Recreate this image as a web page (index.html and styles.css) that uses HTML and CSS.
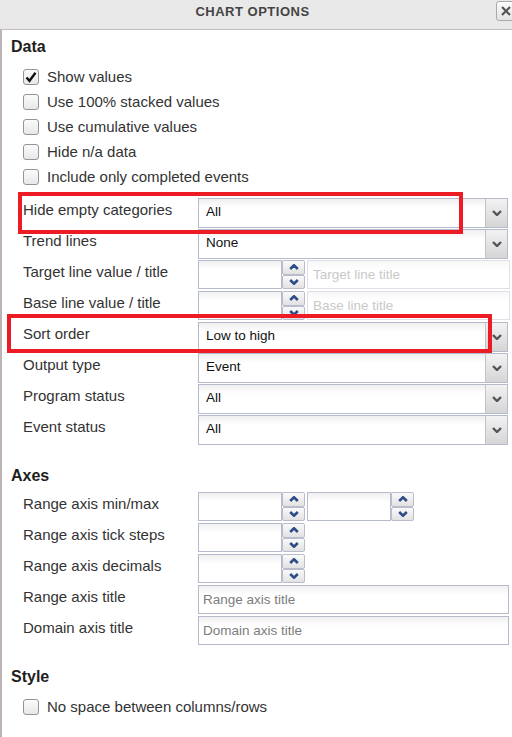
FILE: index.html
```html
<!DOCTYPE html>
<html lang="en">
<head>
<meta charset="utf-8">
<title>Chart options</title>
<link rel="stylesheet" href="styles.css">
</head>
<body>
<div class="dialog">
  <header class="titlebar">
    <span class="title">CHART OPTIONS</span>
    <button class="close" aria-label="Close">
      <svg width="12" height="12" viewBox="0 0 12 12"><path d="M2 2 L10 10 M10 2 L2 10" stroke="#555" stroke-width="2.2" fill="none"/></svg>
    </button>
  </header>

  <div class="main">
    <section class="group">
      <h2 class="group-title">Data</h2>
      <div class="checks">
        <label class="check"><span class="box"><svg width="14" height="14" viewBox="0 0 14 14"><path d="M2.5 7.5 L5.5 10.8 L11.5 2.8" stroke="#111" stroke-width="2.4" fill="none"/></svg></span>Show values</label>
        <label class="check"><span class="box"></span>Use 100% stacked values</label>
        <label class="check"><span class="box"></span>Use cumulative values</label>
        <label class="check"><span class="box"></span>Hide n/a data</label>
        <label class="check"><span class="box"></span>Include only completed events</label>
      </div>
      <div class="fields">
        <div class="field">
          <span class="field-label">Hide empty categories</span>
          <div class="select"><span class="select-value">All</span><span class="select-btn"><svg width="10" height="6" viewBox="0 0 10 6"><path d="M1 1 L5 5 L9 1" stroke="#555" stroke-width="2.4" fill="none"/></svg></span></div>
        </div>
        <div class="field">
          <span class="field-label">Trend lines</span>
          <div class="select"><span class="select-value">None</span><span class="select-btn"><svg width="10" height="6" viewBox="0 0 10 6"><path d="M1 1 L5 5 L9 1" stroke="#555" stroke-width="2.4" fill="none"/></svg></span></div>
        </div>
        <div class="field">
          <span class="field-label">Target line value / title</span>
          <div class="control">
            <div class="spin"><span class="spin-input"></span><span class="spin-btns"><span class="spin-btn"><svg width="10" height="6" viewBox="0 0 10 6"><path d="M1.2 5 L5 1.3 L8.8 5" stroke="#2d4b86" stroke-width="2.6" fill="none"/></svg></span><span class="spin-btn"><svg width="10" height="6" viewBox="0 0 10 6"><path d="M1.2 1 L5 4.7 L8.8 1" stroke="#2d4b86" stroke-width="2.6" fill="none"/></svg></span></span></div>
            <input class="text text-wide text-disabled" type="text" placeholder="Target line title" disabled>
          </div>
        </div>
        <div class="field">
          <span class="field-label">Base line value / title</span>
          <div class="control">
            <div class="spin"><span class="spin-input"></span><span class="spin-btns"><span class="spin-btn"><svg width="10" height="6" viewBox="0 0 10 6"><path d="M1.2 5 L5 1.3 L8.8 5" stroke="#2d4b86" stroke-width="2.6" fill="none"/></svg></span><span class="spin-btn"><svg width="10" height="6" viewBox="0 0 10 6"><path d="M1.2 1 L5 4.7 L8.8 1" stroke="#2d4b86" stroke-width="2.6" fill="none"/></svg></span></span></div>
            <input class="text text-wide text-disabled" type="text" placeholder="Base line title" disabled>
          </div>
        </div>
        <div class="field">
          <span class="field-label">Sort order</span>
          <div class="select"><span class="select-value">Low to high</span><span class="select-btn"><svg width="10" height="6" viewBox="0 0 10 6"><path d="M1 1 L5 5 L9 1" stroke="#555" stroke-width="2.4" fill="none"/></svg></span></div>
        </div>
        <div class="field">
          <span class="field-label">Output type</span>
          <div class="select"><span class="select-value">Event</span><span class="select-btn"><svg width="10" height="6" viewBox="0 0 10 6"><path d="M1 1 L5 5 L9 1" stroke="#555" stroke-width="2.4" fill="none"/></svg></span></div>
        </div>
        <div class="field">
          <span class="field-label">Program status</span>
          <div class="select"><span class="select-value">All</span><span class="select-btn"><svg width="10" height="6" viewBox="0 0 10 6"><path d="M1 1 L5 5 L9 1" stroke="#555" stroke-width="2.4" fill="none"/></svg></span></div>
        </div>
        <div class="field">
          <span class="field-label">Event status</span>
          <div class="select"><span class="select-value">All</span><span class="select-btn"><svg width="10" height="6" viewBox="0 0 10 6"><path d="M1 1 L5 5 L9 1" stroke="#555" stroke-width="2.4" fill="none"/></svg></span></div>
        </div>
      </div>
    </section>

    <section class="group group-axes">
      <h2 class="group-title">Axes</h2>
      <div class="fields fields-tight">
        <div class="field">
          <span class="field-label">Range axis min/max</span>
          <div class="control">
            <div class="spin"><span class="spin-input"></span><span class="spin-btns"><span class="spin-btn"><svg width="10" height="6" viewBox="0 0 10 6"><path d="M1.2 5 L5 1.3 L8.8 5" stroke="#2d4b86" stroke-width="2.6" fill="none"/></svg></span><span class="spin-btn"><svg width="10" height="6" viewBox="0 0 10 6"><path d="M1.2 1 L5 4.7 L8.8 1" stroke="#2d4b86" stroke-width="2.6" fill="none"/></svg></span></span></div>
            <div class="spin"><span class="spin-input"></span><span class="spin-btns"><span class="spin-btn"><svg width="10" height="6" viewBox="0 0 10 6"><path d="M1.2 5 L5 1.3 L8.8 5" stroke="#2d4b86" stroke-width="2.6" fill="none"/></svg></span><span class="spin-btn"><svg width="10" height="6" viewBox="0 0 10 6"><path d="M1.2 1 L5 4.7 L8.8 1" stroke="#2d4b86" stroke-width="2.6" fill="none"/></svg></span></span></div>
          </div>
        </div>
        <div class="field">
          <span class="field-label">Range axis tick steps</span>
          <div class="control">
            <div class="spin"><span class="spin-input"></span><span class="spin-btns"><span class="spin-btn"><svg width="10" height="6" viewBox="0 0 10 6"><path d="M1.2 5 L5 1.3 L8.8 5" stroke="#2d4b86" stroke-width="2.6" fill="none"/></svg></span><span class="spin-btn"><svg width="10" height="6" viewBox="0 0 10 6"><path d="M1.2 1 L5 4.7 L8.8 1" stroke="#2d4b86" stroke-width="2.6" fill="none"/></svg></span></span></div>
          </div>
        </div>
        <div class="field">
          <span class="field-label">Range axis decimals</span>
          <div class="control">
            <div class="spin"><span class="spin-input"></span><span class="spin-btns"><span class="spin-btn"><svg width="10" height="6" viewBox="0 0 10 6"><path d="M1.2 5 L5 1.3 L8.8 5" stroke="#2d4b86" stroke-width="2.6" fill="none"/></svg></span><span class="spin-btn"><svg width="10" height="6" viewBox="0 0 10 6"><path d="M1.2 1 L5 4.7 L8.8 1" stroke="#2d4b86" stroke-width="2.6" fill="none"/></svg></span></span></div>
          </div>
        </div>
        <div class="field">
          <span class="field-label">Range axis title</span>
          <div class="control"><input class="text text-full" type="text" placeholder="Range axis title"></div>
        </div>
        <div class="field">
          <span class="field-label">Domain axis title</span>
          <div class="control"><input class="text text-full" type="text" placeholder="Domain axis title"></div>
        </div>
      </div>
    </section>

    <section class="group group-style">
      <h2 class="group-title">Style</h2>
      <div class="checks">
        <label class="check"><span class="box"></span>No space between columns/rows</label>
      </div>
    </section>
  </div>

  <div class="mark mark-1"></div>
  <div class="mark mark-2"></div>
</div>
</body>
</html>
```

FILE: styles.css
```css
* { box-sizing: border-box; }

html, body {
  margin: 0;
  padding: 0;
}

body {
  width: 512px;
  height: 737px;
  overflow: hidden;
  background: #fff;
  font-family: "Liberation Sans", Arial, sans-serif;
  color: #333;
}

.dialog {
  position: relative;
  width: 512px;
  height: 737px;
}

.titlebar {
  position: relative;
  height: 30px;
  background: #e9e9e9;
  border-bottom: 1px solid #c4bcbc;
  display: flex;
  justify-content: center;
  align-items: flex-start;
  padding: 4px 7px 0 0;
}

.title {
  font-size: 13px;
  line-height: 15px;
  font-weight: bold;
  letter-spacing: 0.5px;
  color: #444;
}

.close {
  position: absolute;
  top: 1px;
  left: 496px;
  width: 19px;
  height: 20px;
  padding: 0;
  border: 1px solid #aaa;
  border-radius: 3px;
  background: linear-gradient(#fbfbfb, #e4e4e4);
  display: flex;
  align-items: center;
  justify-content: center;
}

.main {
  height: 707px;
  border-left: 2px solid #bcb4b4;
  padding: 8px 2px 0 9px;
}

.group + .group {
  margin-top: 21px;
}

.group-title {
  margin: 0 0 7px;
  font-size: 16px;
  line-height: 18px;
  font-weight: bold;
  color: #1e1e1e;
}

.checks {
  padding-left: 12px;
  padding-top: 1px;
}

.check {
  display: flex;
  align-items: center;
  gap: 8px;
  height: 25px;
  font-size: 15px;
  line-height: 17px;
  color: #333;
}

.box {
  width: 16px;
  height: 16px;
  border: 1px solid #959595;
  border-radius: 3px;
  background: linear-gradient(#fbfbfb, #e8e8e8);
  display: flex;
  align-items: center;
  justify-content: center;
}

.fields {
  margin-top: 9px;
  padding-left: 12px;
}

.fields-tight {
  margin-top: 0;
}

.field {
  display: grid;
  grid-template-columns: 175px auto;
  height: 31px;
}

.field-label {
  padding-top: 3px;
  font-size: 15px;
  line-height: 17px;
  white-space: nowrap;
  color: #333;
}

.control {
  display: flex;
  gap: 2px;
  height: 29px;
}

.select {
  display: flex;
  width: 310px;
  height: 30px;
  border: 1px solid #b6bacd;
}

.select-value {
  flex: 1;
  padding-left: 7px;
  font-size: 13.5px;
  line-height: 25px;
  color: #111;
  background: linear-gradient(#efefef, #fff 9px);
}

.select-btn {
  width: 22px;
  border-left: 1px solid #c3c3c3;
  background: linear-gradient(#f2f2f2, #d5d5d5);
  display: flex;
  align-items: center;
  justify-content: center;
}

.spin {
  display: flex;
  width: 107px;
  height: 29px;
}

.spin-input {
  flex: 1;
  border: 1px solid #b6bacd;
  background: linear-gradient(#f0f0f0, #fff 9px);
}

.spin-btns {
  width: 23px;
  display: flex;
  flex-direction: column;
}

.spin-btn {
  flex: 1;
  border: 1px solid #b9bccd;
  border-radius: 2px;
  background: linear-gradient(#fafafa, #e2e2e2);
  display: flex;
  align-items: center;
  justify-content: center;
}

.text {
  height: 29px;
  margin: 0;
  padding: 0 0 0 4px;
  border: 1px solid #b6bacd;
  border-radius: 0;
  font-family: "Liberation Sans", Arial, sans-serif;
  font-size: 13.5px;
  color: #222;
  background: linear-gradient(#f0f0f0, #fff 9px);
  outline: none;
}

.text::placeholder {
  color: #7c7c7c;
}

.text-wide {
  width: 203px;
  padding-left: 5px;
}

.text-full {
  width: 311px;
}

.text-disabled {
  border-color: #dfe0e8;
  background: linear-gradient(#f7f7f7, #fff 9px);
}

.text-disabled::placeholder {
  color: #c9c9c9;
}

.mark {
  position: absolute;
  border: 4px solid #ed1c24;
  pointer-events: none;
}

.mark-1 {
  left: 18px;
  top: 192px;
  width: 445px;
  height: 42px;
}

.mark-2 {
  left: 7px;
  top: 314px;
  width: 485px;
  height: 39px;
}
```
